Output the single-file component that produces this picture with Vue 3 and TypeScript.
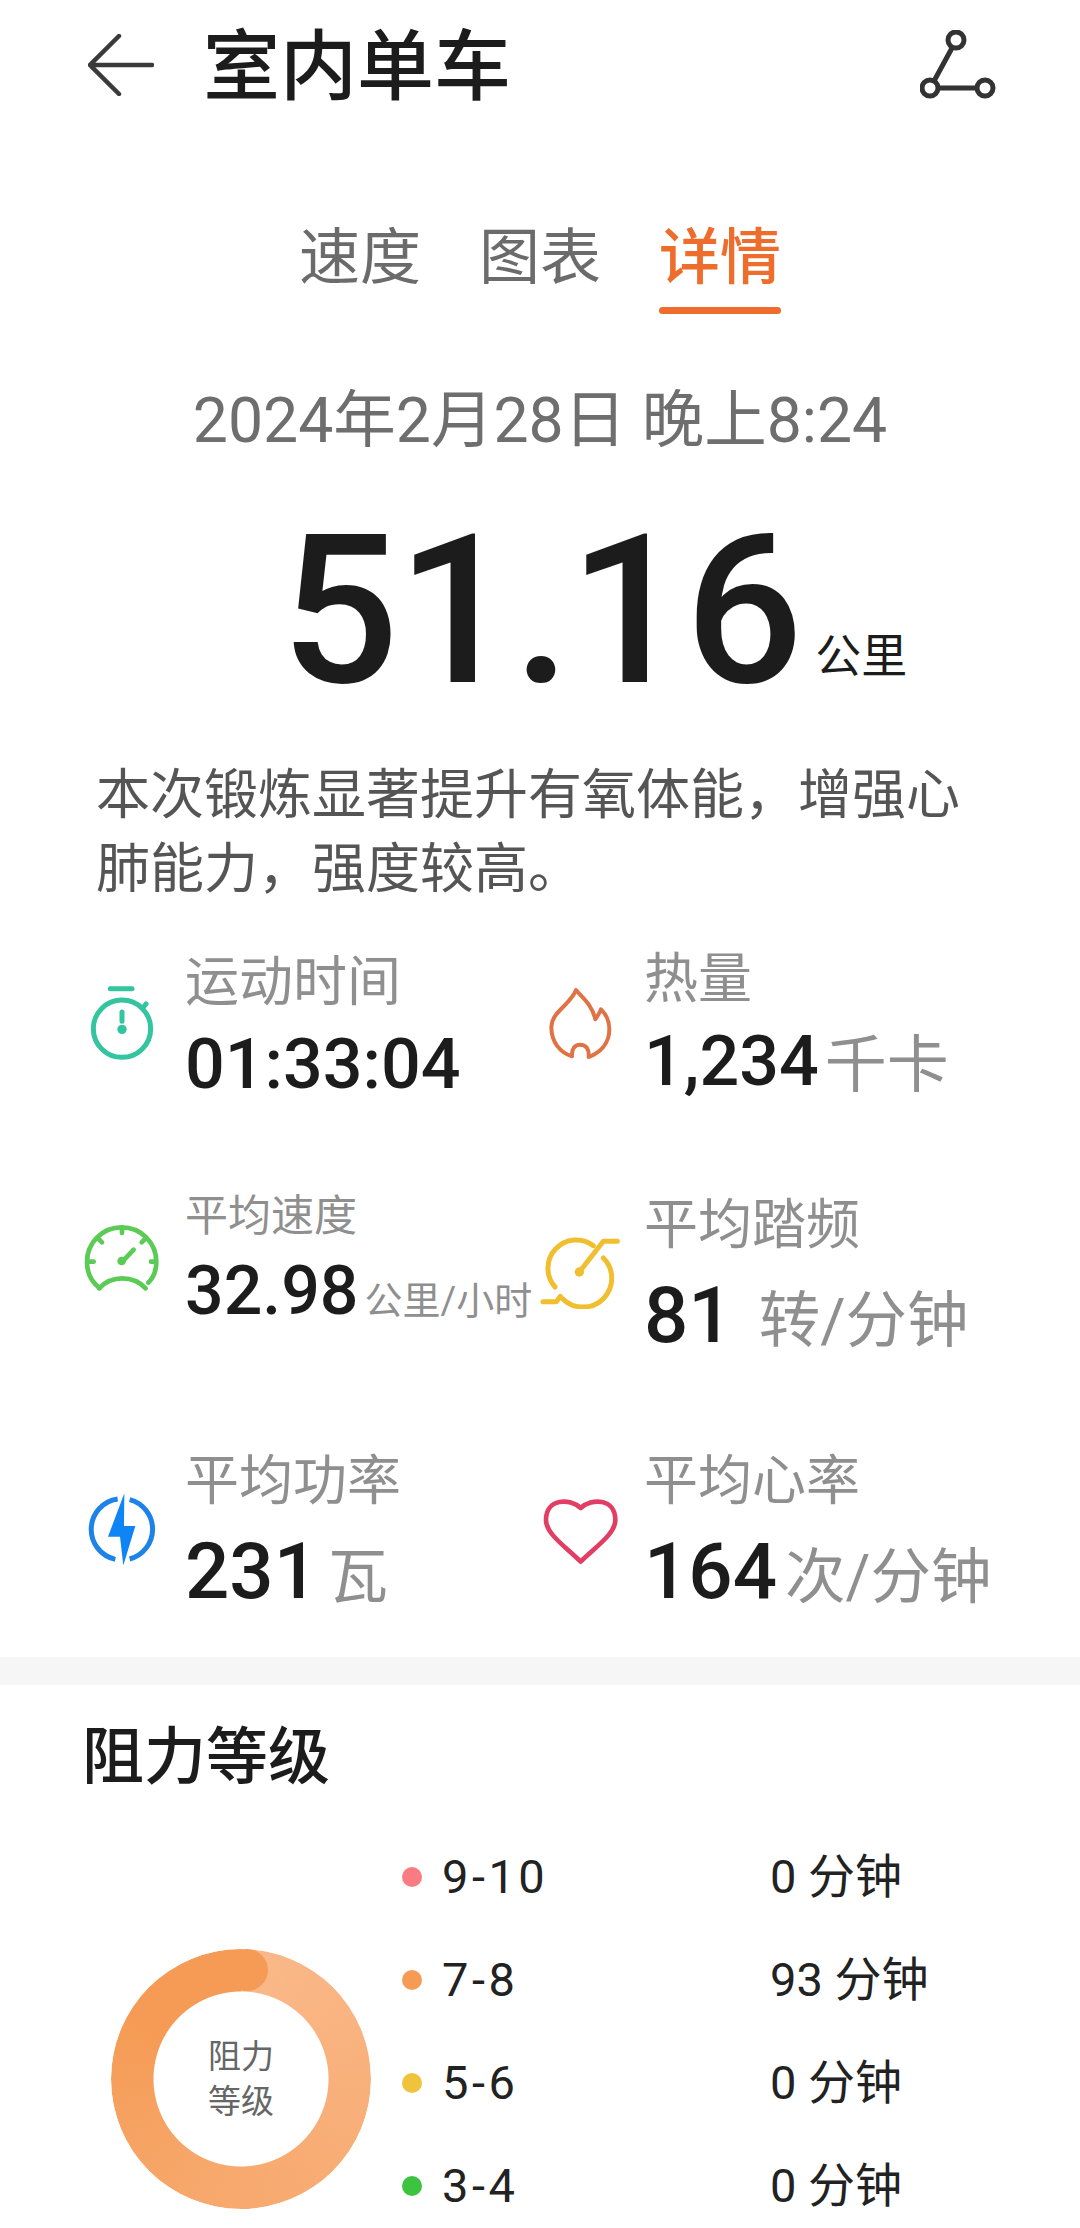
<script setup lang="ts">
// 室内单车 workout detail page: header, tabs, total distance, stat grid, resistance donut.
interface Level {
  range: string
  time: string
  color: string
}

const levels: Level[] = [
  { range: '9-10', time: '0 分钟', color: '#F97C83' },
  { range: '7-8', time: '93 分钟', color: '#F59B55' },
  { range: '5-6', time: '0 分钟', color: '#EFC43C' },
  { range: '3-4', time: '0 分钟', color: '#3CC440' },
]
</script>

<template>
  <div class="page">
    <header class="head">
      <svg class="back" viewBox="0 0 66 62" fill="none" stroke="#3a3a3a" stroke-width="4.5" stroke-linecap="round">
        <path d="M31 2 2 31l29 29M4 31h60" />
      </svg>
      <h1 class="title">室内单车</h1>
      <svg class="route" viewBox="0 0 76 70" fill="none" stroke="#333" stroke-width="5">
        <circle cx="36" cy="10" r="8" />
        <circle cx="10" cy="58" r="8" />
        <circle cx="65" cy="58" r="8" />
        <path d="M32 18 14 51M18 58h39" />
      </svg>
    </header>

    <nav class="tabs">
      <span class="tab">速度</span>
      <span class="tab">图表</span>
      <span class="tab tab--on">详情</span>
    </nav>

    <div class="date">2024年2月28日 晚上8:24</div>

    <div class="total"><span class="total__num">51.16</span><span class="total__unit">公里</span></div>

    <p class="desc">本次锻炼显著提升有氧体能，增强心肺能力，强度较高。</p>

    <section class="stats">
      <div class="stat stat--first">
        <svg class="ico" viewBox="65 150 240 240" fill="none" stroke="#33C4A0" stroke-width="15" stroke-linecap="round">
          <path d="M150 170h65" />
          <circle cx="185" cy="290" r="86" />
          <path d="M247 228l10-12M185 240v28" />
          <circle cx="185" cy="292" r="14" fill="#33C4A0" stroke="none" />
        </svg>
        <div class="stat__text">
          <div class="lab">运动时间</div>
          <div class="val">01:33:04</div>
        </div>
      </div>
      <div class="stat stat--r stat--first">
        <svg class="ico" viewBox="60 150 240 240" fill="none" stroke="#E07345" stroke-width="12" stroke-linecap="round" stroke-linejoin="round">
          <path d="M168 174C185 195 215 215 226 262 232 252 240 242 243 232 262 250 268 272 268 292 268 335 240 362 206 375 208 350 198 338 180 338 164 338 154 352 156 373 120 362 94 330 94 285 94 240 150 220 168 174Z" />
        </svg>
        <div class="stat__text">
          <div class="lab">热量</div>
          <div class="val">1,234<span class="unit unit--lg">千卡</span></div>
        </div>
      </div>

      <div class="stat stat--up">
        <svg class="ico" viewBox="65 853 240 240" fill="none" stroke="#5BCB55" stroke-width="14" stroke-linecap="round">
          <path d="M118 1075c-24-18-38-44-38-78 0-58 46-104 104-104s104 46 104 104c0 24-10 48-24 62" />
          <path d="M116 1076c38-40 102-40 140 0" />
          <path d="M185 900v10M115 928l10 10M254 928l-10 10M84 996h16M286 996h-14M186 996l34-36" />
          <circle cx="184" cy="994" r="13" fill="#5BCB55" stroke="none" />
        </svg>
        <div class="stat__text">
          <div class="lab lab--sm">平均速度</div>
          <div class="val val--sm">32.98<span class="unit unit--sm">公里/小时</span></div>
        </div>
      </div>
      <div class="stat stat--r">
        <svg class="ico" viewBox="65 898 240 240" fill="none" stroke="#F0BE2E" stroke-width="15" stroke-linecap="round" stroke-linejoin="round">
          <path d="M225 948a85 85 0 0 0-115 124M255 985a85 85 0 0 1-122 122" />
          <path d="M183 1027l72-92h42M126 1100l-12 16H74" />
          <circle cx="183" cy="1027" r="14" fill="#F0BE2E" stroke="none" />
        </svg>
        <div class="stat__text">
          <div class="lab">平均踏频</div>
          <div class="val val--big">81<span class="unit unit--wide">转/分钟</span></div>
        </div>
      </div>

      <div class="stat">
        <svg class="ico" viewBox="65 195 240 240" fill="none" stroke="#1D83E8" stroke-width="15">
          <path d="M172 237A92 92 0 0 0 165 418M208 239A92 92 0 0 1 208 417" />
          <path d="M192 220 143 350h36l10 86 36-118h-34z" fill="#0F84F5" stroke="none" />
        </svg>
        <div class="stat__text">
          <div class="lab">平均功率</div>
          <div class="val val--big">231<span class="unit unit--one">瓦</span></div>
        </div>
      </div>
      <div class="stat stat--r">
        <svg class="ico" viewBox="60 195 240 240" fill="none" stroke="#E23D62" stroke-width="14" stroke-linejoin="round">
          <path d="M182 264c-32-30-104-30-104 36 0 40 52 75 104 125 52-50 104-85 104-125 0-66-72-66-104-36z" />
        </svg>
        <div class="stat__text">
          <div class="lab">平均心率</div>
          <div class="val val--big">164<span class="unit">次/分钟</span></div>
        </div>
      </div>
    </section>

    <div class="band"></div>

    <section class="resist">
      <h2 class="resist__title">阻力等级</h2>
      <div class="resist__body">
        <div class="donut">
          <div class="donut__ring"></div>
          <div class="donut__cap"></div>
          <div class="donut__text">阻力<br />等级</div>
        </div>
        <ul class="legend">
          <li v-for="l in levels" :key="l.range" class="legend__row">
            <span class="legend__dot" :style="{ background: l.color }"></span>
            <span class="legend__range">{{ l.range }}</span>
            <span class="legend__time">{{ l.time }}</span>
          </li>
        </ul>
      </div>
    </section>
  </div>
</template>

<style>
html,
body {
  margin: 0;
  background: #fff;
}
</style>

<style scoped>
.page {
  width: 1080px;
  height: 2228px;
  overflow: hidden;
  background: #fff;
  color: #1c1c1c;
  font-family: Roboto, "Noto Sans CJK SC", sans-serif;
}
.head {
  display: flex;
  align-items: center;
  height: 130px;
  padding: 0 84px 0 88px;
}
.back {
  width: 66px;
  height: 62px;
}
.title {
  flex: 1;
  margin: 6px 0 0 49px;
  font-size: 77px;
  font-weight: 500;
  line-height: 130px;
}
.route {
  width: 76px;
  height: 70px;
}
.tabs {
  display: flex;
  justify-content: center;
  gap: 58px;
  height: 100px;
  margin-top: 92px;
  font-size: 61px;
  line-height: 72px;
  color: #6b6b6b;
}
.tab {
  position: relative;
  height: 92px;
}
.tab--on {
  color: #ee6c2c;
  font-weight: 500;
}
.tab--on::after {
  content: "";
  position: absolute;
  left: 0;
  right: 0;
  bottom: 0;
  height: 7px;
  border-radius: 4px;
  background: #ee6c2c;
}
.date {
  margin-top: 61px;
  text-align: center;
  font-size: 62.5px;
  line-height: 76px;
  color: #6e6e6e;
}
.total {
  height: 240px;
  margin-top: 32px;
  padding-left: 108px;
  text-align: center;
  font-size: 208px;
  line-height: 240px;
}
.total__num {
  font-weight: 500;
  letter-spacing: -2px;
}
.total__unit {
  margin-left: 14px;
  font-size: 46px;
  line-height: 1;
  vertical-align: 10px;
}
.desc {
  width: 880px;
  margin: 28px 0 0 96px;
  font-size: 54px;
  line-height: 74px;
  color: #555;
}
.stats {
  display: grid;
  grid-template-columns: 458px 458px;
  grid-template-rows: 230px 264px 248px;
  padding: 0 0 8px 82px;
}
.stat {
  display: flex;
  align-items: center;
  gap: 23px;
}
.stat--r {
  gap: 24px;
}
.stat--up {
  padding-bottom: 30px;
}
.ico {
  flex: none;
  width: 80px;
  height: 80px;
}
.stat__text {
  padding-top: 16px;
  white-space: nowrap;
}
.stat--first .stat__text {
  padding-top: 9px;
}
.stat--up .stat__text {
  padding-top: 20px;
}
.lab {
  font-size: 54px;
  line-height: 66px;
  color: #8f8f8f;
}
.lab--sm {
  font-size: 43px;
  line-height: 56px;
}
.val {
  margin-top: 8px;
  font-size: 70px;
  font-weight: 500;
  line-height: 80px;
}
.val--sm {
  margin-top: 7px;
  font-size: 68px;
}
.val--big {
  margin-top: 17px;
  font-size: 78px;
}
.unit {
  margin-left: 8px;
  font-size: 60.5px;
  font-weight: 400;
  color: #8f8f8f;
}
.unit--lg {
  margin-left: 6px;
  font-size: 62px;
  vertical-align: -2px;
}
.unit--sm {
  margin-left: 6px;
  font-size: 38px;
}
.unit--wide {
  margin-left: 26px;
  font-size: 61.5px;
}
.unit--one {
  margin-left: 10px;
  font-size: 60px;
}
.band {
  height: 28px;
  background: #f6f6f6;
}
.resist {
  padding: 31px 0 0 82px;
}
.resist__title {
  margin: 0;
  font-size: 62px;
  font-weight: 500;
  line-height: 84px;
}
.resist__body {
  display: flex;
  align-items: flex-end;
  margin-top: 25px;
}
.donut {
  position: relative;
  flex: none;
  width: 260px;
  height: 260px;
  margin: 0 0 28px 29px;
}
.donut__ring {
  position: absolute;
  inset: 0;
  border-radius: 50%;
  background: conic-gradient(#fab98a 0deg, #f8ae77 120deg, #f7a86c 200deg, #f59b55 300deg, #f59b55 360deg);
  -webkit-mask: radial-gradient(circle, transparent 87px, #000 88px);
  mask: radial-gradient(circle, transparent 87px, #000 88px);
}
.donut__cap {
  position: absolute;
  left: 115px;
  top: 0;
  width: 42px;
  height: 42px;
  border-radius: 50%;
  background: #f59b55;
}
.donut__text {
  position: absolute;
  inset: 0;
  display: flex;
  align-items: center;
  justify-content: center;
  text-align: center;
  font-size: 33px;
  line-height: 45px;
  color: #666;
}
.legend {
  flex: 1;
  margin: 0 0 0 31px;
  padding: 0;
  list-style: none;
}
.legend__row {
  display: flex;
  align-items: center;
  height: 103px;
  font-size: 47px;
  line-height: 60px;
  color: #222;
}
.legend__dot {
  flex: none;
  width: 20px;
  height: 20px;
  border-radius: 50%;
}
.legend__range {
  width: 328px;
  margin-left: 20px;
  letter-spacing: 3.5px;
}
</style>
